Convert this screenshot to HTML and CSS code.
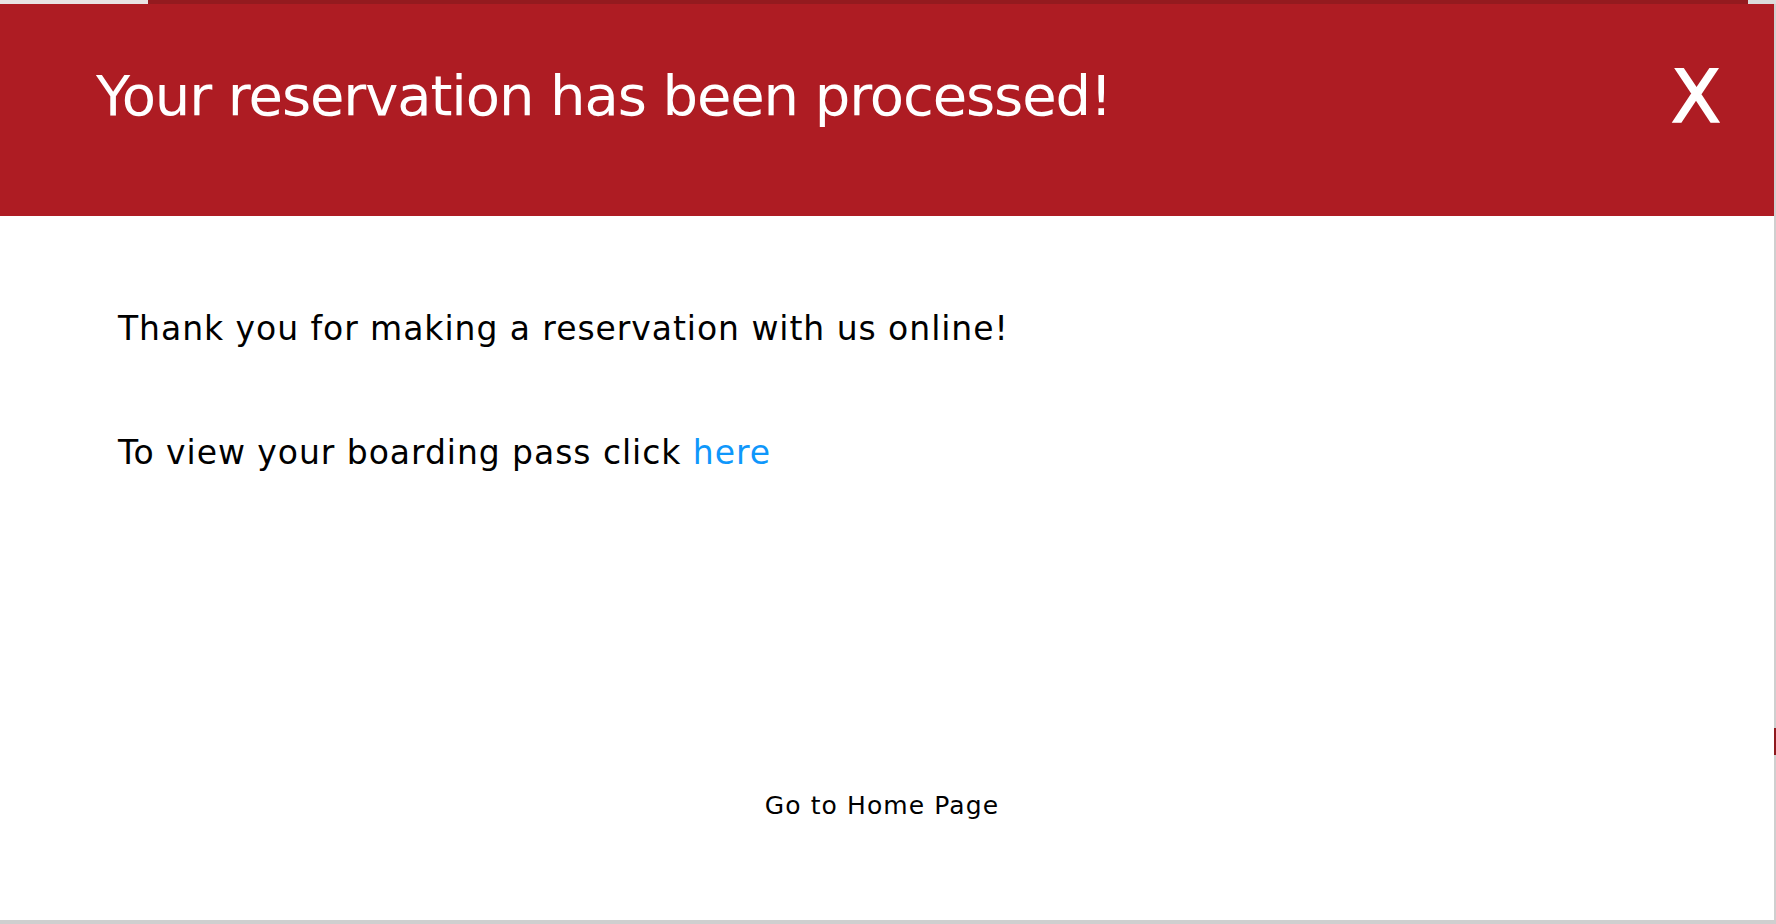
FILE: index.html
```html
<!DOCTYPE html>
<html>
<head>
<meta charset="utf-8">
<link rel="stylesheet" href="styles.css">
</head>
<body>
<div class="page">
  <div class="topstrip"><span class="tab"></span><span class="bar"></span></div>
  <div class="row">
    <div class="modal">
      <div class="header">
        <h1 class="title">Your reservation has been processed!</h1>
        <span class="close">X</span>
      </div>
      <div class="content">
        <p class="line first">Thank you for making a reservation with us online!</p>
        <p class="line">To view your boarding pass click <a class="link" href="#">here</a></p>
      </div>
      <div class="footer">
        <a class="home" href="#">Go to Home Page</a>
      </div>
    </div>
    <div class="edge"><span class="mark"></span></div>
  </div>
  <div class="bottom"></div>
</div>
</body>
</html>
```
FILE: styles.css
```css
html, body { margin: 0; padding: 0; }
body {
  width: 1776px;
  height: 924px;
  overflow: hidden;
  background: #dcdcdc;
  font-family: "DejaVu Sans", sans-serif;
}
.page { display: flex; flex-direction: column; height: 924px; }
.topstrip { display: flex; height: 4px; }
.tab { width: 148px; background: #e9e4e4; }
.bar { width: 1600px; background: #941a1f; }
.row { display: flex; height: 916px; }
.modal {
  width: 1774px;
  display: flex;
  flex-direction: column;
  background: #fff;
}
.header {
  height: 212px;
  background: #ae1c23;
  display: flex;
  align-items: flex-start;
  justify-content: space-between;
  box-sizing: border-box;
  padding: 0 53px 0 96px;
}
.title {
  margin: 57px 0 0 0;
  font-weight: normal;
  color: #fff;
  font-size: 56px;
  line-height: 70px;
  letter-spacing: -1.1px;
}
.close {
  color: #fff;
  font-size: 73px;
  line-height: 90px;
  margin-top: 48px;
  -webkit-text-stroke: 1.5px #fff;
}
.content { padding: 0 0 0 118px; flex: 1; }
.line {
  margin: 0;
  font-size: 33px;
  line-height: 40px;
  letter-spacing: 0.95px;
  color: #000;
}
.line.first { margin-top: 93px; margin-bottom: 84px; }
.link { color: #0f97fb; text-decoration: none; }
.footer {
  display: flex;
  justify-content: center;
  padding: 0 10px 100px 0;
}
.home {
  color: #000;
  text-decoration: none;
  font-size: 25px;
  line-height: 28px;
  letter-spacing: 1.1px;
}
.edge { width: 2px; background: #cfcfcf; display: flex; flex-direction: column; }
.mark { margin-top: 724px; height: 27px; background: #8e1a1e; }
.bottom { height: 4px; background: #cfcfcf; }
```
